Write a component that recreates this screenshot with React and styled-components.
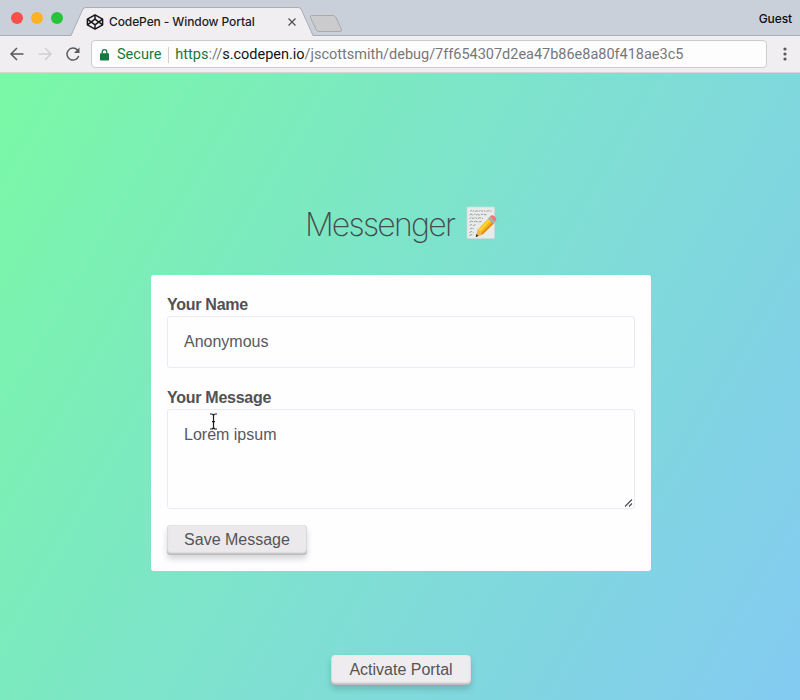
import React from 'react';
import styled, { createGlobalStyle } from 'styled-components';

const GlobalStyle = createGlobalStyle`
  *, *::before, *::after { box-sizing: border-box; }
  body { margin: 0; background: #7ee3cc; }
`;

const sans = `'Liberation Sans', Arial, sans-serif`;

const BrowserWindow = styled.div`
  width: 800px;
  height: 700px;
  display: flex;
  flex-direction: column;
  overflow: hidden;
  font-family: ${sans};
`;

const TabStrip = styled.div`
  height: 36px;
  flex: none;
  display: flex;
  background: #cad0da;
  box-shadow: inset 0 -1px #a9adb5;
`;

const TrafficLights = styled.div`
  display: flex;
  gap: 8px;
  padding: 12px 0 0 11px;
  width: 71px;
`;

const Light = styled.span`
  width: 12px;
  height: 12px;
  border-radius: 50%;
  background: ${(p) => p.$color};
`;

const Tab = styled.div`
  position: relative;
  width: 243px;
  height: 36px;
  display: flex;
  align-items: center;
  padding: 8px 18px 0 15px;
`;

const TabShape = styled.svg`
  position: absolute;
  left: 0;
  top: 0;
`;

const TabIcon = styled.svg`
  position: relative;
  flex: none;
`;

const TabTitle = styled.span`
  position: relative;
  flex: 1;
  margin-left: 5px;
  font: 500 12px/16px Inter, sans-serif;
  letter-spacing: -0.1px;
  color: #1c1c1e;
  white-space: nowrap;
`;

const NewTab = styled.svg`
  margin: 14px 0 0 -5px;
`;

const Guest = styled.span`
  margin: 11px 8px 0 auto;
  font: 500 12px/16px Inter, sans-serif;
  letter-spacing: -0.1px;
  color: #0c0c0e;
`;

const Toolbar = styled.div`
  height: 37px;
  flex: none;
  display: flex;
  align-items: center;
  padding: 0 7px 1px 9px;
  background: #f0eef0;
  border-bottom: 1px solid #d5d5d6;
`;

const NavIcons = styled.div`
  display: flex;
  gap: 12px;
  width: 82px;
`;

const AddressBar = styled.div`
  width: 676px;
  height: 28px;
  display: flex;
  align-items: center;
  padding: 2px 8px 0;
  background: #fefdfe;
  border: 1px solid #cccbcd;
  border-radius: 4px;
  font: 400 14.5px/20px Roboto, sans-serif;
  white-space: nowrap;
`;

const Secure = styled.span`
  margin-left: 8px;
  padding-right: 7px;
  line-height: 16px;
  border-right: 1px solid #cfcfcf;
  color: #137a40;
`;

const Url = styled.span`
  margin-left: 6px;
  letter-spacing: -0.015px;
  color: #77777a;
`;

const UrlPart = styled.span`
  color: ${(p) => p.$color};
`;

const MenuDots = styled.svg`
  margin-left: auto;
`;

const Page = styled.main`
  flex: 1;
  display: flex;
  flex-direction: column;
  align-items: center;
  padding: 128px 0 0 2px;
  background: linear-gradient(120deg, #7af7a7 3%, #7ee0d1 52%, #83cbf0 98%);
`;

const Heading = styled.h1`
  display: flex;
  align-items: center;
  gap: 12px;
  height: 44px;
  margin: 0 0 30px;
  font: 200 32px/44px Inter, sans-serif;
  letter-spacing: -1.75px;
  color: #454b4b;
`;

const HeadingText = styled.span`
  padding-top: 3px;
`;

const Card = styled.form`
  width: 500px;
  height: 296px;
  padding: 20px 16px 0;
  background: #fefdff;
  border-radius: 3px;
`;

const Label = styled.label`
  display: block;
  height: 21px;
  font: 700 16px/19px ${sans};
  letter-spacing: -0.27px;
  color: #515153;
`;

const fieldStyle = `
  display: block;
  width: 468px;
  padding: 16px;
  border: 1px solid #ebeaee;
  border-radius: 3px;
  outline: none;
  background: #fefdff;
  font: 400 16px/18px ${sans};
  color: #59595b;
`;

const TextInput = styled.input`
  ${fieldStyle}
  height: 52px;
  margin-bottom: 20px;
`;

const MessageBox = styled.div`
  ${fieldStyle}
  position: relative;
  height: 100px;
  margin-bottom: 16px;
`;

const ResizeGrip = styled.svg`
  position: absolute;
  right: 0;
  bottom: 0;
`;

const TextCursor = styled.svg`
  position: absolute;
  left: 41px;
  top: 3px;
`;

const Button = styled.button`
  display: block;
  width: 140px;
  height: 30px;
  padding: 0 0 1px;
  border: 0;
  border-radius: 4px;
  background: #ebe9ec;
  box-shadow: inset 0 -2px 2px rgba(0, 0, 0, 0.2), inset 0 0 1px rgba(0, 0, 0, 0.18),
    0 4px 6px rgba(0, 0, 0, 0.16);
  font: 400 16px/20px ${sans};
  color: #545456;
  white-space: nowrap;
`;

const Activate = styled(Button)`
  margin-top: 84px;
  background: #eeecef;
`;

function CodePenLogo() {
  return (
    <TabIcon width="18" height="16" viewBox="0 0 18 16" fill="none" stroke="#17171a" strokeWidth="1.5" strokeLinejoin="round">
      <path d="M9 .9 16.6 5.2v5.6L9 15.1 1.4 10.8V5.2Z" />
      <path d="M9 .9v4.3M9 10.8v4.3M1.4 5.2 9 10.8l7.6-5.6M1.4 10.8 9 5.2l7.6 5.6" />
    </TabIcon>
  );
}

function MemoIcon() {
  return (
    <svg width="31" height="34" viewBox="0 0 31 34">
      <rect x="1" y="1" width="27.5" height="31.500" rx="1" fill="#e9eaea" stroke="#d3d9d8" strokeWidth=".7" />
      <g fill="none" stroke="#85888a" strokeWidth=".8">
        <path d="m4 5.500 1.500-1 1 1 1.500-1 1 1 2-.7 2 .5 1.500-1 1 1 2-.5 2 .5 3-.5 3 .3" strokeDasharray="3 .8 1.500 1" />
        <path d="m3.500 9 1.500-1 1.500 1 2-1 1 1 2-.5 2 .5 3-.8 4 .6" strokeDasharray="4 1 2 .8" />
        <path d="m3.500 12.500 2-1 1.500 1 2-1 2 1 3-.7 3 .7" strokeDasharray="2 .8 3 1" />
        <path d="m3.500 16 2-1 2 1 2-.8 3 .8 3-.7" strokeDasharray="4 1" />
        <path d="m3.500 19.500 2-1 2 1 2-.8" strokeDasharray="3 1" />
        <path d="m4 23 2-1 2 1M3.500 26.500l2-1 2 1M3.500 29.500l3-1.300" strokeDasharray="3 .8" />
      </g>
      <path d="m9.700 31 2-7.300L23.300 11.500l5.200 5L16.500 28.500Z" fill="#f6b518" />
      <path d="m12.300 24 11.500-11.800 1.700 1.600L14 26Z" fill="#ffd239" />
      <path d="m15 27.700 12-12.200 1.500 1.200-12 11.800Z" fill="#db8b12" />
      <path d="m9.700 31 2-7.300 4.800 4.800Z" fill="#e8b560" />
      <path d="m9.700 31 .8-3 2 2Z" fill="#292522" />
      <path d="m22 12.700 1.800-1.900 5.300 5-2 1.900Z" fill="#9fb1b8" />
      <path d="m23.800 10.800 1.500-1.300c2-.9 5.400 2.100 5 4.300l-1.200 2Z" fill="#ed7974" />
    </svg>
  );
}

export default function App() {
  return (
    <BrowserWindow>
      <GlobalStyle />
      <TabStrip>
        <TrafficLights>
          <Light $color="#fb4f4b" />
          <Light $color="#fdb225" />
          <Light $color="#25c43b" />
        </TrafficLights>
        <Tab>
          <TabShape width="243" height="36">
            <path d="M0 36 11.500 10Q12.500 8 14.500 8H227.500Q229.500 8 230.500 10L242 36Z" fill="#f0eef0" />
            <path d="M0 35.500 11.500 9.800Q12.500 7.500 14.500 7.500H227.500Q229.500 7.500 230.500 9.800L242 35.500" fill="none" stroke="#a9adb5" />
          </TabShape>
          <CodePenLogo />
          <TabTitle>CodePen - Window Portal</TabTitle>
          <TabIcon width="8" height="8" viewBox="0 0 8 8" stroke="#515356" strokeWidth="1.300">
            <path d="m.5.5 7 7m0-7-7 7" />
          </TabIcon>
        </Tab>
        <NewTab width="35" height="19" viewBox="0 0 35 19">
          <path d="M2.500 1.500H24q2 0 3 2l5.500 12q.7 2-1.500 2H10q-2 0-3-2L1.500 3.500q-.7-2 1-2Z" fill="#cbcacc" stroke="#a9aaad" />
        </NewTab>
        <Guest>Guest</Guest>
      </TabStrip>
      <Toolbar>
        <NavIcons>
          <svg width="16" height="16" viewBox="0 0 16 16" fill="none" stroke="#57595b" strokeWidth="1.500">
            <path d="M14.500 8H2.500M8 2 2 8l6 6" />
          </svg>
          <svg width="16" height="16" viewBox="0 0 16 16" fill="none" stroke="#cfced0" strokeWidth="1.500">
            <path d="M1.500 8h12M8 2l6 6-6 6" />
          </svg>
          <svg width="16" height="16" viewBox="0 0 16 16">
            <path d="M12.500 4.100A6 6 0 1 0 13.700 10" fill="none" stroke="#57595b" strokeWidth="1.500" />
            <path d="M14.500 1.500V7H9Z" fill="#57595b" />
          </svg>
        </NavIcons>
        <AddressBar>
          <svg width="9" height="12" viewBox="0 0 9 12">
            <rect y="4.300" width="9" height="7.200" rx=".8" fill="#137a40" />
            <path d="M2.200 5V3a2.300 2.300 0 0 1 4.600 0v2" fill="none" stroke="#137a40" strokeWidth="1.200" />
          </svg>
          <Secure>Secure</Secure>
          <Url>
            <UrlPart $color="#137a40">https</UrlPart>://<UrlPart $color="#141416">s.codepen.io</UrlPart>
            /jscottsmith/debug/7ff654307d2ea47b86e8a80f418ae3c5
          </Url>
        </AddressBar>
        <MenuDots width="16" height="16" viewBox="0 0 16 16" fill="#57595b">
          <circle cx="8" cy="3" r="1.600" />
          <circle cx="8" cy="8" r="1.600" />
          <circle cx="8" cy="13" r="1.600" />
        </MenuDots>
      </Toolbar>
      <Page>
        <Heading>
          <HeadingText>Messenger</HeadingText>
          <MemoIcon />
        </Heading>
        <Card>
          <Label htmlFor="name">Your Name</Label>
          <TextInput id="name" defaultValue="Anonymous" />
          <Label>Your Message</Label>
          <MessageBox>
            Lorem ipsum
            <TextCursor width="9" height="17" viewBox="0 0 9 17" fill="none" stroke="#1b1b1d" strokeWidth="1.200">
              <path d="M1 1h1.500q2 0 2 2v11q0 2-2 2H1M8 1H6.500q-2 0-2 2M8 16H6.500q-2 0-2-2M3 8.700h3" />
            </TextCursor>
            <ResizeGrip width="10" height="10" viewBox="0 0 10 10" stroke="#4e4e50" strokeWidth="1.200">
              <path d="m1 8.500 7-7m-3 7 3-3" />
            </ResizeGrip>
          </MessageBox>
          <Button type="button">Save Message</Button>
        </Card>
        <Activate type="button">Activate Portal</Activate>
      </Page>
    </BrowserWindow>
  );
}
